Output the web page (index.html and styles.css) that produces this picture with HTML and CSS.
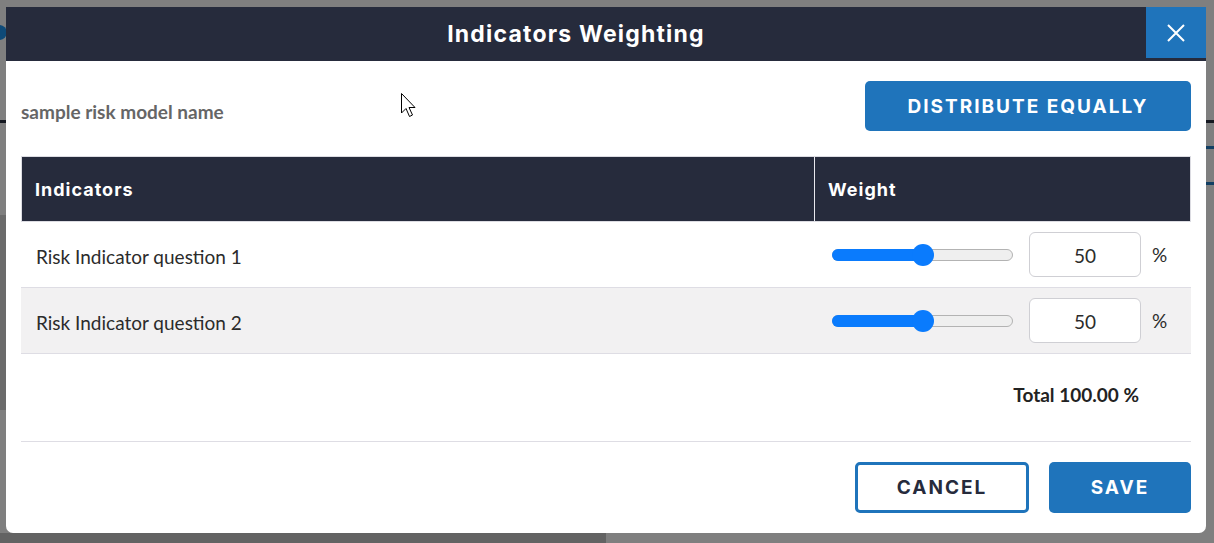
FILE: index.html
```html
<!DOCTYPE html>
<html>
<head>
<meta charset="utf-8">
<link rel="stylesheet" href="styles.css">
</head>
<body>
<div class="page">
  <span class="bg-dot"></span>
  <span class="bg-line bg-line-l"></span>
  <span class="bg-line bg-line-r"></span>
  <span class="bg-blue bg-blue-1"></span>
  <span class="bg-blue bg-blue-2"></span>
  <span class="bg-panel"></span>
  <span class="bg-bottom"></span>
</div>

<div class="modal">
  <div class="modal-header">
    <h1 class="modal-title">Indicators Weighting</h1>
    <button class="close-btn" aria-label="Close">
      <svg width="18" height="18" viewBox="0 0 18 18"><path d="M1 1 L17 17 M17 1 L1 17" stroke="#fff" stroke-width="2" fill="none"/></svg>
    </button>
  </div>
  <div class="modal-body">
    <div class="top-row">
      <div class="model-name">sample risk model name</div>
      <button class="btn btn-primary btn-distribute">DISTRIBUTE EQUALLY</button>
    </div>
    <div class="table">
      <div class="thead">
        <div class="th th-ind">Indicators</div>
        <div class="th th-weight">Weight</div>
      </div>
      <div class="tr">
        <div class="td td-ind">Risk Indicator question 1</div>
        <div class="td td-weight">
          <div class="slider"><div class="slider-fill" style="width:50%"></div><div class="slider-thumb" style="left:50%"></div></div>
          <div class="num-input">50</div>
          <span class="pct">%</span>
        </div>
      </div>
      <div class="tr tr-alt">
        <div class="td td-ind">Risk Indicator question 2</div>
        <div class="td td-weight">
          <div class="slider"><div class="slider-fill" style="width:50%"></div><div class="slider-thumb" style="left:50%"></div></div>
          <div class="num-input">50</div>
          <span class="pct">%</span>
        </div>
      </div>
      <div class="tr tr-total">
        <div class="td td-ind"></div>
        <div class="td td-total">Total 100.00 %</div>
      </div>
    </div>
    <div class="actions">
      <button class="btn btn-outline">CANCEL</button>
      <button class="btn btn-primary btn-save">SAVE</button>
    </div>
  </div>
</div>

<svg class="cursor" width="18" height="28" viewBox="0 0 18 28"><path d="M1.5 1.5 L1.5 21 L6 16.5 L9.5 24.5 L12.5 23 L9 15.5 L15 15.5 Z" fill="#fff" stroke="#000" stroke-width="1" stroke-linejoin="miter"/></svg>
</body>
</html>
```

FILE: styles.css
```css
* { box-sizing: border-box; }
html, body { margin: 0; padding: 0; }
body {
  width: 1214px;
  height: 543px;
  overflow: hidden;
  background: #7f7f7f;
  font-family: "Lato", "Noto Sans", sans-serif;
  position: relative;
}

.page { position: absolute; inset: 0; }
.bg-dot { position: absolute; left: -8px; top: 25px; width: 15px; height: 15px; border-radius: 50%; background: #0e4a78; }
.bg-line { position: absolute; height: 3px; background: #141820; top: 120px; }
.bg-line-l { left: 0; width: 8px; }
.bg-line-r { left: 1206px; width: 8px; }
.bg-blue { position: absolute; left: 1206px; width: 8px; height: 3px; background: #123f63; }
.bg-blue-1 { top: 146px; }
.bg-blue-2 { top: 182px; }
.bg-panel { position: absolute; left: 0; top: 215px; width: 6px; height: 195px; background: #6b6b6b; }
.bg-bottom { position: absolute; left: 0; top: 533px; width: 606px; height: 10px; background: #636363; }

.modal {
  position: absolute;
  left: 6px;
  top: 7px;
  width: 1200px;
  height: 526px;
  background: #fff;
  border-radius: 0 0 7px 7px;
  display: flex;
  flex-direction: column;
}

.modal-header {
  height: 54px;
  background: #262b3c;
  display: flex;
  align-items: flex-start;
}
.modal-title {
  flex: 1;
  margin: 0;
  height: 54px;
  line-height: 55px;
  text-align: center;
  color: #fff;
  font-family: "Inter", "Open Sans", sans-serif;
  font-weight: 700;
  font-size: 23px;
  letter-spacing: 1.2px;
}
.close-btn {
  width: 60px;
  height: 51px;
  border: 0;
  padding: 0;
  background: #1f74bb;
  display: flex;
  align-items: center;
  justify-content: center;
}

.modal-body {
  padding: 20px 15px 20px 15px;
  display: flex;
  flex-direction: column;
  flex: 1;
}

.top-row {
  display: flex;
  align-items: center;
  justify-content: space-between;
  height: 50px;
}
.model-name {
  font-weight: 700;
  font-size: 19px;
  color: #666;
  padding-top: 10px;
}

.btn {
  font-family: "Inter", "Open Sans", sans-serif;
  font-weight: 700;
  font-size: 19px;
  letter-spacing: 2px;
  border-radius: 5px;
  height: 51px;
  cursor: pointer;
  padding: 0;
}
.btn-primary { background: #1f74bb; color: #fff; border: 0; }
.btn-distribute { width: 326px; height: 50px; }
.btn-outline { background: #fff; color: #262b3c; border: 3px solid #1f74bb; width: 174px; }
.btn-save { width: 142px; }

.table {
  margin-top: 25px;
  display: flex;
  flex-direction: column;
}
.thead {
  display: flex;
  height: 66px;
  background: #262b3c;
  border: 1px solid #dcdce2;
}
.th {
  color: #fff;
  font-family: "Inter", "Open Sans", sans-serif;
  font-weight: 700;
  font-size: 18px;
  letter-spacing: 1px;
  display: flex;
  align-items: center;
}
.th-ind { width: 793px; padding-left: 13px; border-right: 1px solid #e8e8ee; }
.th-weight { flex: 1; padding-left: 13px; }

.tr { display: flex; height: 66px; border-bottom: 1px solid #dedde4; }
.tr-alt { background: #f2f1f2; }
.td { display: flex; align-items: center; }
.td-ind { width: 794px; padding-left: 15px; font-size: 19px; color: #2b2b2b; padding-top: 3px; }
.td-weight { flex: 1; padding-left: 17px; }

.slider {
  position: relative;
  width: 181px;
  height: 12px;
  border-radius: 6px;
  background: #efefef;
  border: 1px solid #b3b3b3;
}
.slider-fill {
  position: absolute;
  left: -1px; top: -1px; bottom: -1px;
  background: #0a7bfd;
  border-radius: 6px 0 0 6px;
}
.slider-thumb {
  position: absolute;
  top: 50%;
  width: 22px;
  height: 22px;
  margin-left: -11px;
  margin-top: -11px;
  border-radius: 50%;
  background: #0a7bfd;
}
.num-input {
  margin-left: 16px;
  width: 112px;
  height: 45px;
  border: 1px solid #cfcfd4;
  border-radius: 6px;
  background: #fff;
  display: flex;
  align-items: center;
  justify-content: center;
  font-size: 19px;
  color: #2b2b2b;
  padding-top: 2px;
}
.pct { margin-left: 11px; font-size: 19px; color: #2b2b2b; }

.tr-total { height: 88px; }
.td-total {
  flex: 1;
  justify-content: flex-end;
  padding-right: 52px;
  padding-bottom: 7px;
  font-weight: 700;
  font-size: 19px;
  color: #222;
}

.actions {
  margin-top: 20px;
  display: flex;
  justify-content: flex-end;
  gap: 20px;
}

.cursor { position: absolute; left: 400px; top: 92px; }
```
